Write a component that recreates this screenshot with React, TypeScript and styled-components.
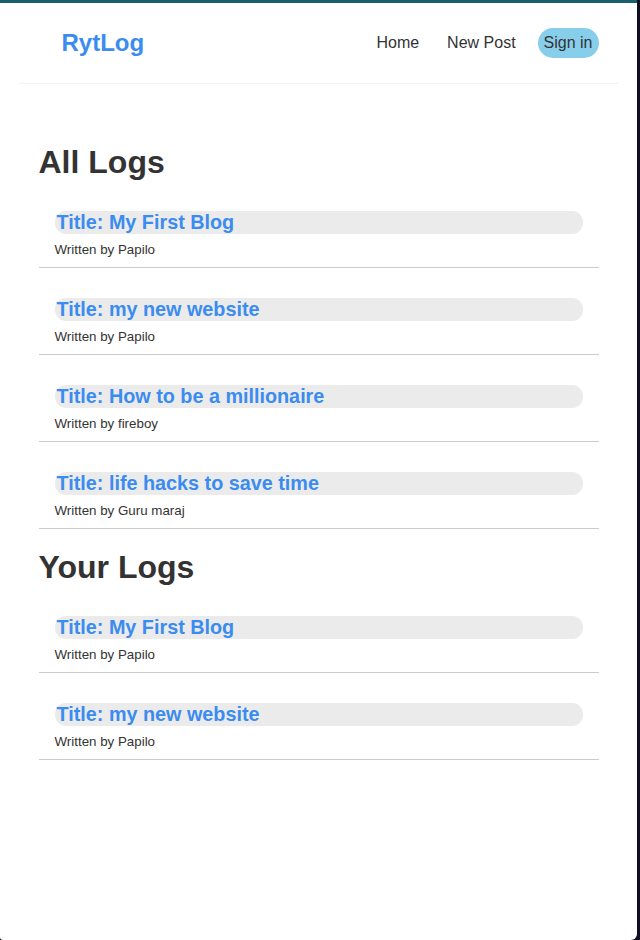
import React from "react";
import styled, { createGlobalStyle } from "styled-components";

const GlobalStyle = createGlobalStyle`
  html, body {
    margin: 0;
    padding: 0;
    background: #120d22;
  }
  body {
    font-family: "Liberation Sans", Arial, sans-serif;
  }
`;

const Frame = styled.div`
  width: 637px;
  height: 940px;
  box-sizing: border-box;
  border-top: 3px solid #1b5e6d;
  background: #ffffff;
  border-radius: 0 0 6px 3px;
  overflow: hidden;
`;

const Navbar = styled.nav`
  width: 600px;
  box-sizing: border-box;
  margin: 0 auto;
  padding: 20px;
  display: flex;
  align-items: center;
  height: 81px;
  border-bottom: 1px solid #f2f2f2;
`;

const Brand = styled.h1`
  margin: 0 0 0 23px;
  font-size: 24px;
  font-weight: bold;
  color: #3b8cf0;
`;

const Links = styled.div`
  margin-left: auto;
  display: flex;
  align-items: center;
`;

const NavLink = styled.a<{ $highlight?: boolean }>`
  margin-left: 16px;
  padding: 6px;
  font-size: 16px;
  line-height: 18px;
  color: #333;
  text-decoration: none;
  border-radius: 15px;
  background: ${(p) => (p.$highlight ? "#87ceeb" : "transparent")};
`;

const Content = styled.main`
  width: 600px;
  box-sizing: border-box;
  margin: 40px auto;
  padding: 20px;
`;

const SectionTitle = styled.h2`
  margin: 0;
  font-size: 32px;
  line-height: 37px;
  font-weight: bold;
  color: #333;
`;

const Preview = styled.div`
  padding: 10px 16px;
  margin: 20px 0;
  border-bottom: 1px solid #cccccc;
`;

const PreviewTitle = styled.h3`
  margin: 0;
  padding: 0 2px;
  font-size: 19.8px;
  line-height: 23px;
  font-weight: bold;
  color: #3b8cf0;
  background: #ebebeb;
  border-radius: 11px;
`;

const Byline = styled.p`
  margin: 8px 0 0;
  font-size: 13.33px;
  line-height: 15px;
  color: #333;
`;

type Log = { title: string; author: string };

const allLogs: Log[] = [
  { title: "My First Blog", author: "Papilo" },
  { title: "my new website", author: "Papilo" },
  { title: "How to be a millionaire", author: "fireboy" },
  { title: "life hacks to save time", author: "Guru maraj" },
];

const yourLogs: Log[] = [
  { title: "My First Blog", author: "Papilo" },
  { title: "my new website", author: "Papilo" },
];

const LogList = ({ heading, logs }: { heading: string; logs: Log[] }) => (
  <section>
    <SectionTitle>{heading}</SectionTitle>
    {logs.map((log, i) => (
      <Preview key={i}>
        <PreviewTitle>Title: {log.title}</PreviewTitle>
        <Byline>Written by {log.author}</Byline>
      </Preview>
    ))}
  </section>
);

export default function App() {
  return (
    <>
      <GlobalStyle />
      <Frame>
        <Navbar>
          <Brand>RytLog</Brand>
          <Links>
            <NavLink href="#">Home</NavLink>
            <NavLink href="#">New Post</NavLink>
            <NavLink href="#" $highlight>
              Sign in
            </NavLink>
          </Links>
        </Navbar>
        <Content>
          <LogList heading="All Logs" logs={allLogs} />
          <LogList heading="Your Logs" logs={yourLogs} />
        </Content>
      </Frame>
    </>
  );
}
